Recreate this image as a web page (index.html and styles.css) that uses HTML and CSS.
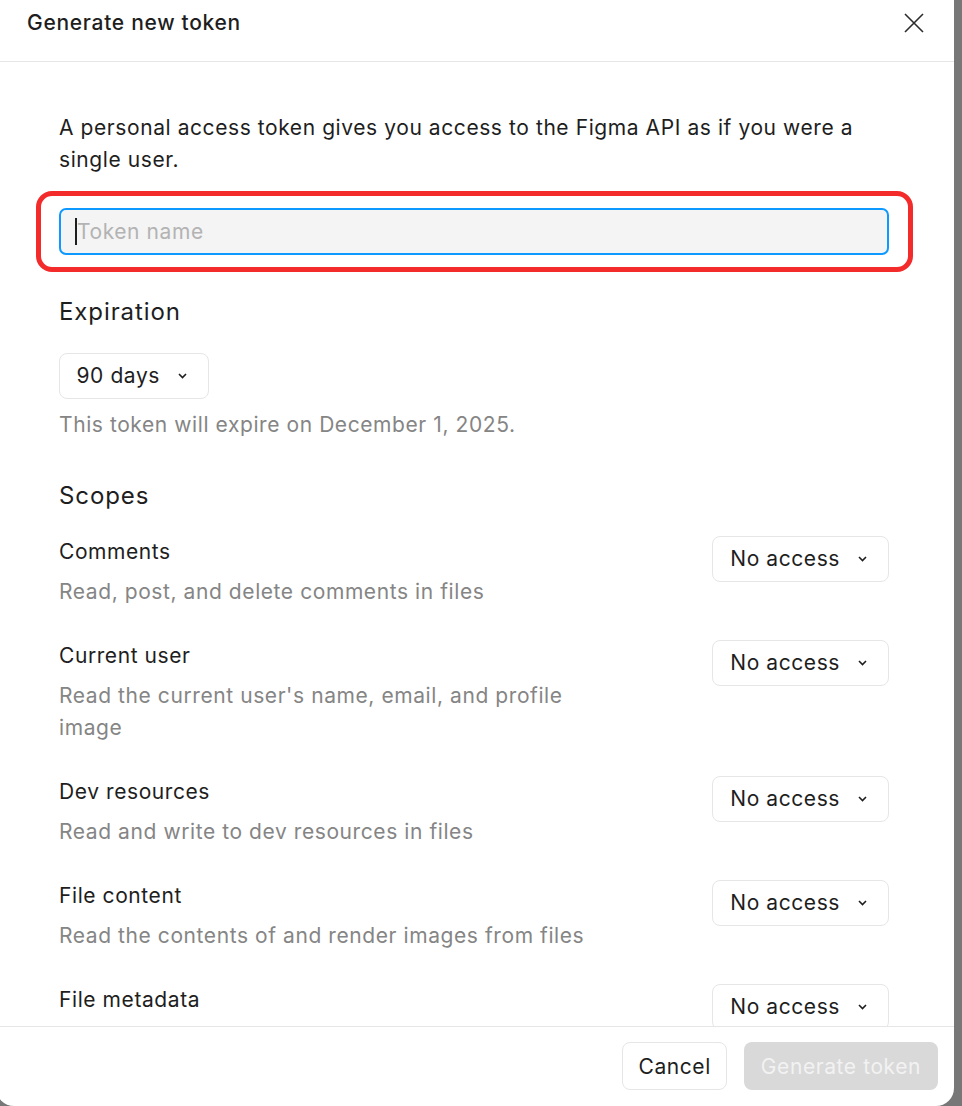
FILE: index.html
```html
<!DOCTYPE html>
<html lang="en">
<head>
<meta charset="utf-8">
<title>Generate new token</title>
<link rel="stylesheet" href="styles.css">
</head>
<body>
<div class="dialog">
  <header class="dialog-header">
    <h1 class="dialog-title">Generate new token</h1>
    <button class="close-btn" aria-label="Close">
      <svg width="20" height="20" viewBox="0 0 20 20"><path d="M1 1L19 19M19 1L1 19" stroke="#2c2c2c" stroke-width="1.6" fill="none"/></svg>
    </button>
  </header>
  <main class="dialog-body">
    <p class="intro">A personal access token gives you access to the Figma API as if you were a single user.</p>
    <div class="input-wrap">
      <div class="token-input"><span class="caret"></span><span class="placeholder">Token name</span></div>
      <div class="highlight"></div>
    </div>
    <h2 class="section-title expiration-title">Expiration</h2>
    <button class="select select-days"><span>90 days</span><svg class="chev" width="9" height="6" viewBox="0 0 9 6"><path d="M1 1L4.5 4.5L8 1" stroke="#1e1e1e" stroke-width="1.6" fill="none"/></svg></button>
    <p class="muted expire-note">This token will expire on December 1, 2025.</p>
    <h2 class="section-title scopes-title">Scopes</h2>
    <div class="scopes">
      <div class="scope">
        <div class="scope-text"><div class="scope-name">Comments</div><div class="muted scope-desc">Read, post, and delete comments in files</div></div>
        <button class="select"><span>No access</span><svg class="chev" width="9" height="6" viewBox="0 0 9 6"><path d="M1 1L4.5 4.5L8 1" stroke="#1e1e1e" stroke-width="1.6" fill="none"/></svg></button>
      </div>
      <div class="scope">
        <div class="scope-text"><div class="scope-name">Current user</div><div class="muted scope-desc">Read the current user's name, email, and profile image</div></div>
        <button class="select"><span>No access</span><svg class="chev" width="9" height="6" viewBox="0 0 9 6"><path d="M1 1L4.5 4.5L8 1" stroke="#1e1e1e" stroke-width="1.6" fill="none"/></svg></button>
      </div>
      <div class="scope">
        <div class="scope-text"><div class="scope-name">Dev resources</div><div class="muted scope-desc">Read and write to dev resources in files</div></div>
        <button class="select"><span>No access</span><svg class="chev" width="9" height="6" viewBox="0 0 9 6"><path d="M1 1L4.5 4.5L8 1" stroke="#1e1e1e" stroke-width="1.6" fill="none"/></svg></button>
      </div>
      <div class="scope">
        <div class="scope-text"><div class="scope-name">File content</div><div class="muted scope-desc">Read the contents of and render images from files</div></div>
        <button class="select"><span>No access</span><svg class="chev" width="9" height="6" viewBox="0 0 9 6"><path d="M1 1L4.5 4.5L8 1" stroke="#1e1e1e" stroke-width="1.6" fill="none"/></svg></button>
      </div>
      <div class="scope">
        <div class="scope-text"><div class="scope-name">File metadata</div></div>
        <button class="select"><span>No access</span><svg class="chev" width="9" height="6" viewBox="0 0 9 6"><path d="M1 1L4.5 4.5L8 1" stroke="#1e1e1e" stroke-width="1.6" fill="none"/></svg></button>
      </div>
    </div>
  </main>
  <footer class="dialog-footer">
    <button class="btn btn-secondary">Cancel</button>
    <button class="btn btn-primary" disabled>Generate token</button>
  </footer>
</div>
</body>
</html>
```

FILE: styles.css
```css
* { box-sizing: border-box; }
html, body { margin: 0; padding: 0; }
body {
  background: #777777;
  font-family: Inter, "Noto Sans", sans-serif;
  color: #1e1e1e;
  width: 962px;
  height: 1106px;
  overflow: hidden;
}
.dialog {
  width: 958px;
  height: 1106px;
  margin-left: -4px;
  background: #ffffff;
  border-radius: 0 0 18px 18px;
  display: flex;
  flex-direction: column;
  overflow: hidden;
}
.dialog-header {
  height: 62px;
  flex: none;
  border-bottom: 1.5px solid #e6e6e6;
  display: flex;
  align-items: flex-start;
  justify-content: space-between;
  padding: 0 30px 0 31px;
}
.dialog-title {
  margin: 0;
  font-size: 21px;
  font-weight: 500;
  line-height: 46px;
  letter-spacing: 0.7px;
}
.close-btn {
  border: 0;
  background: none;
  padding: 0;
  margin-top: 13px;
  width: 20px;
  height: 20px;
  display: flex;
}
.dialog-body {
  flex: 1;
  overflow: hidden;
  padding: 50px 65px 0 63px;
  font-size: 21px;
  line-height: 32px;
  letter-spacing: 0.58px;
}
.intro { margin: 0; }
.input-wrap {
  position: relative;
  margin-top: 32px;
}
.token-input {
  height: 47px;
  border: 2px solid #0d99ff;
  border-radius: 7px;
  background: #f4f4f4;
  display: flex;
  align-items: center;
  padding-left: 14px;
}
.caret {
  width: 2px;
  height: 27px;
  background: #1e1e1e;
}
.placeholder { color: #b3b3b3; }
.highlight {
  position: absolute;
  left: -23px;
  right: -24px;
  top: -17px;
  bottom: -17px;
  border: 5px solid #f42b2b;
  border-radius: 16px;
  pointer-events: none;
}
.section-title {
  margin: 0;
  font-size: 24px;
  font-weight: 400;
  line-height: 32px;
  letter-spacing: 0.9px;
}
.expiration-title { margin-top: 41px; }
.select {
  font: inherit;
  letter-spacing: inherit;
  color: #1e1e1e;
  background: #ffffff;
  border: 1.5px solid #e6e6e6;
  border-radius: 8px;
  height: 46px;
  display: inline-flex;
  align-items: center;
  gap: 18px;
  padding: 0 21px 0 16.5px;
  flex: none;
}
.scope .select { padding-left: 17px; }
.select-days { margin-top: 25px; height: 46px; }
.muted { color: #858585; }
.expire-note { margin: 10px 0 0; }
.scopes-title { margin-top: 39px; }
.scopes {
  margin-top: 24px;
  display: flex;
  flex-direction: column;
  gap: 32px;
}
.scope {
  display: flex;
  justify-content: space-between;
  align-items: flex-start;
}
.scope-text { max-width: 540px; }
.scope-desc { margin-top: 8px; }
.chev { display: block; }
.dialog-footer {
  flex: none;
  height: 80px;
  border-top: 1.5px solid #e6e6e6;
  display: flex;
  justify-content: flex-end;
  align-items: flex-start;
  gap: 17px;
  padding: 15px 16px 0 0;
}
.btn {
  font: inherit;
  font-size: 21px;
  letter-spacing: 0.58px;
  height: 48px;
  border-radius: 8px;
  padding: 0 15px;
}
.btn-secondary {
  background: #ffffff;
  color: #1e1e1e;
  border: 1.5px solid #e6e6e6;
}
.btn-primary {
  background: #d9d9d9;
  color: #f2f2f2;
  border: 0;
  padding: 0 17px;
}
```
